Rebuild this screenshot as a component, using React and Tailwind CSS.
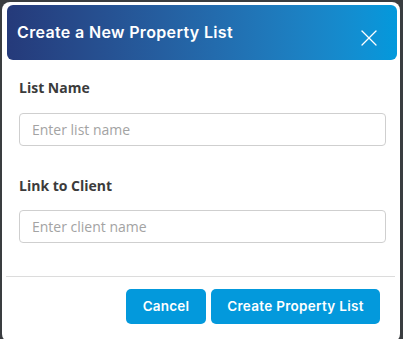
import { X } from 'lucide-react';

const App = () => {
    return (
        <div className="w-[403px] h-[339px] bg-[#3a3d40] pt-[2px] pl-[2px] pr-[3px] overflow-hidden">
            <div className="h-[340px] bg-white rounded-[8px] pt-[3px] pl-[5px] pr-[3px] flex flex-col">
                {/* Encabezado */}
                <div className="h-[55px] rounded-[6px] bg-gradient-to-r from-[#253a7a] to-[#0399dc] flex items-center justify-between pl-[10px] pr-[14px]">
                    <h2 className="text-white text-[16px] font-semibold tracking-[0.35px] font-['Inter','Liberation_Sans',sans-serif] -mt-[1px]">
                        Create a New Property List
                    </h2>
                    <X className="text-white w-[28px] h-[28px] mt-[10px]" strokeWidth={1.1} />
                </div>

                {/* Formulario */}
                <div className="pl-[12px] pr-[11px] pt-[18px] font-['Open_Sans','Liberation_Sans',sans-serif]">
                    <label className="block text-[14px] leading-[20px] font-bold text-[#3b3b3b]">List Name</label>
                    <input
                        type="text"
                        placeholder="Enter list name"
                        className="mt-[15px] w-full h-[33px] border border-[#cfcfcf] rounded-[4px] px-[12px] text-[14px] placeholder:text-[#a3a3a3] outline-none"
                    />
                    <label className="block mt-[30px] text-[14px] leading-[20px] font-bold text-[#3b3b3b]">Link to Client</label>
                    <input
                        type="text"
                        placeholder="Enter client name"
                        className="mt-[14px] w-full h-[33px] border border-[#cfcfcf] rounded-[4px] px-[12px] text-[14px] placeholder:text-[#a3a3a3] outline-none"
                    />
                </div>

                <div className="mt-[33px] -ml-[1px] mr-[2px] border-t border-[#dcdcdc]"></div>

                {/* Botones */}
                <div className="flex justify-end gap-[5px] pt-[12px] pr-[17px] font-['Inter','Liberation_Sans',sans-serif]">
                    <button className="w-[80px] h-[35px] rounded-[5px] bg-[#0399dc] text-white text-[13.5px] font-semibold tracking-[0.2px]">
                        Cancel
                    </button>
                    <button className="w-[169px] h-[35px] rounded-[5px] bg-[#0399dc] text-white text-[13.5px] font-semibold tracking-[0.3px]">
                        Create Property List
                    </button>
                </div>
            </div>
        </div>
    );
};

export default App;
